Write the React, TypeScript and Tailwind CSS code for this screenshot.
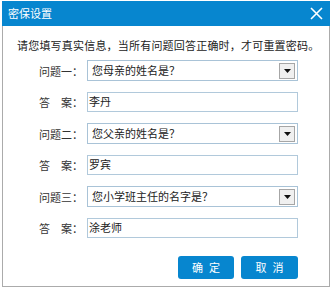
import React from "react";

const font = { fontFamily: '"Noto Sans CJK SC", "Noto Sans", sans-serif' };

function SelectBox({ text }: { text: string }) {
  return (
    <div className="w-[211px] h-[21px] border border-[#a9c3d7] bg-white flex items-center justify-between pl-[4px] pr-[2px]">
      <span className="text-[11px] leading-none text-[#222]">{text}</span>
      <div className="w-[16px] h-[16px] border border-[#a6a6a6] bg-[#f0f0f0] flex items-center justify-center">
        <svg width="7" height="4" viewBox="0 0 7 4">
          <path d="M0 0 L7 0 L3.5 4 Z" fill="#111" />
        </svg>
      </div>
    </div>
  );
}

function AnswerBox({ text }: { text: string }) {
  return (
    <div className="w-[211px] h-[20px] border border-[#b1c9db] bg-white pl-[1px] pt-[1px] text-[11px] leading-[14px] text-[#222] overflow-hidden">
      {text}
    </div>
  );
}

function Row({ label, children }: { label: React.ReactNode; children: React.ReactNode }) {
  return (
    <div className="flex items-center">
      <div className="w-[80px] text-right text-[11px] leading-[14px] text-[#333]">{label}</div>
      <div className="ml-[4px]">{children}</div>
    </div>
  );
}

export default function App() {
  const qs = [
    { l: "问题一：", q: "您母亲的姓名是？", a: "李丹" },
    { l: "问题二：", q: "您父亲的姓名是？", a: "罗宾" },
    { l: "问题三：", q: "您小学班主任的名字是？", a: "涂老师" },
  ];
  return (
    <div className="w-[333px] h-[289px] bg-white pt-[1px] pl-[2px]" style={font}>
      <div className="w-[328px] h-[286px] flex flex-col">
        <div className="h-[25px] bg-[#0786cf] flex items-center justify-between pl-[6px] pr-[7px]">
          <span className="text-white text-[11px]">密保设置</span>
          <svg width="13" height="13" viewBox="0 0 13 13">
            <path d="M1 1 L12 12 M12 1 L1 12" stroke="#fff" strokeWidth="1.6" />
          </svg>
        </div>
        <div className="flex-1 border-x border-b border-[#ababab] flex flex-col">
          <div className="pt-[11px] pl-[14px] text-[11px] leading-[16px] tracking-[0.2px] text-[#222] whitespace-nowrap">
            请您填写真实信息，当所有问题回答正确时，才可重置密码。
          </div>
          <div className="mt-[7px] flex flex-col gap-[11px]">
            {qs.map((x, i) => (
              <React.Fragment key={i}>
                <Row label={x.l}>
                  <SelectBox text={x.q} />
                </Row>
                <Row label={"答　案："}>
                  <AnswerBox text={x.a} />
                </Row>
              </React.Fragment>
            ))}
          </div>
          <div className="mt-[18px] flex justify-end gap-[7px] pr-[31px]">
            <button className="w-[56px] h-[23px] rounded-[3px] bg-[#0786cf] text-white text-[11px] tracking-[6px] pl-[6px]">
              确定
            </button>
            <button className="w-[57px] h-[23px] rounded-[3px] bg-[#0786cf] text-white text-[11px] tracking-[6px] pl-[6px]">
              取消
            </button>
          </div>
        </div>
      </div>
    </div>
  );
}
